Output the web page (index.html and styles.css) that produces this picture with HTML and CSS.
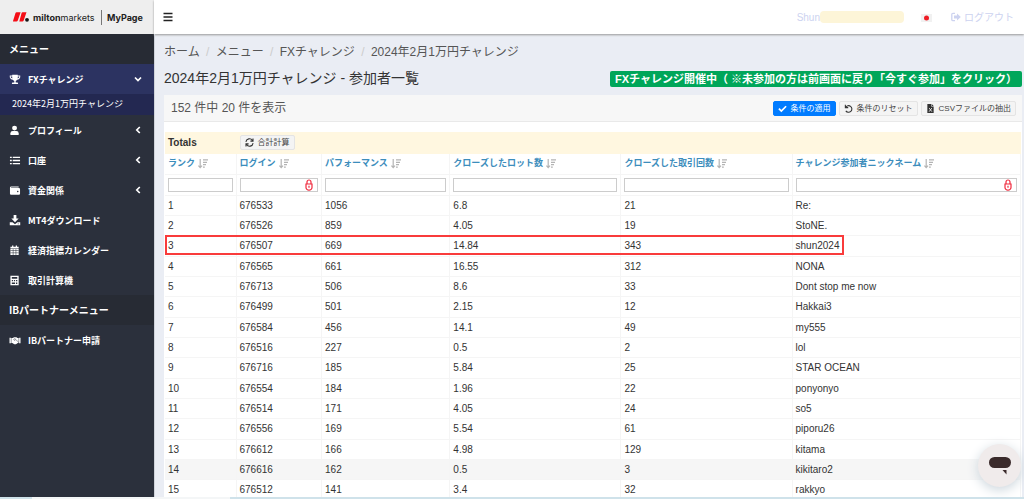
FILE: index.html
```html
<!DOCTYPE html>
<html lang="ja">
<head>
<meta charset="utf-8">
<title>MyPage</title>
<link rel="stylesheet" href="styles.css">
</head>
<body>
<svg class="defs" aria-hidden="true">
  <symbol id="sort" viewBox="0 0 10 10"><path d="M2.2 0v8M.4 6.6l1.8 2 1.8-2M5 .9h5M5 3.3h4M5 5.7h3M5 8.1h1.8" fill="none" stroke="#b4b4b4" stroke-width="1.2"/></symbol>
  <symbol id="left" viewBox="0 0 8 10"><path d="M5.8 2 2.8 5l3 3" fill="none" stroke="#fff" stroke-width="1.7"/></symbol>
  <symbol id="lock" viewBox="0 0 8 12"><path d="M2 5V3a2 2 0 0 1 4 0v2M1 5h6v3.500a3 2.600 0 0 1-6 0zM4 6.800v2" fill="none" stroke="#f0283c" stroke-width="1.2"/></symbol>
</svg>
<div class="app">
  <aside class="sidebar">
    <a class="brand" href="#">
      <svg class="logo" viewBox="0 0 17 12" aria-hidden="true"><path d="M3.600 1.200h4L4.800 9.500q-.4 1-1.400 1H.4q-.6 0-.3-.8L2.500 2q.3-.8 1.100-.8zM9.500 1.200h4l-2.800 8.300q-.4 1-1.400 1h-3L8.600 2q.2-.8.900-.8z" fill="#f40d16"/><circle cx="14" cy="8.800" r="1.900" fill="#151515"/></svg>
      <span class="name"><b>milton</b>markets</span><span class="product">MyPage</span>
    </a>
    <nav>
      <h2 class="section">メニュー</h2>
      <a class="item active" href="#"><svg viewBox="0 0 12 12"><path d="M3 .7h6v1h2.700v1.600C11.700 5 10.200 6 8.400 6.300 7.900 7 7.300 7.400 6.800 7.600v1.600h1.700c.6 0 .9.500.9 1.800H2.600c0-1.300.3-1.800.9-1.800h1.700V7.600C4.700 7.400 4.100 7 3.600 6.300 1.800 6 .3 5 .3 3.300V1.700H3zM1.300 2.800c0 1 .7 1.700 1.800 2.100L2.900 2.800zm9.400 0H9.100l-.2 2.100c1.100-.4 1.800-1.100 1.800-2.100z" fill="#fff" fill-rule="evenodd"/></svg><span>FXチャレンジ</span><svg class="caret" viewBox="0 0 8 10"><path d="M1 3.500 4 6.500l3-3" fill="none" stroke="#fff" stroke-width="1.700"/></svg></a>
      <a class="sub" href="#">2024年2月1万円チャレンジ</a>
      <a class="item" href="#"><svg viewBox="0 0 12 12"><circle cx="5.500" cy="3.400" r="2.700" fill="#fff"/><path d="M1 11V9q0-2.500 2.500-2.500h4Q10 6.500 10 9v2z" fill="#fff"/></svg><span>プロフィール</span><svg class="caret"><use href="#left"/></svg></a>
      <a class="item" href="#"><svg viewBox="0 0 12 12"><path d="M.5 2.500h2M.5 6h2M.5 9.500h2M3.500 2.500h8M3.500 6h8M3.500 9.500h8" stroke="#fff" stroke-width="1.400"/></svg><span>口座</span><svg class="caret"><use href="#left"/></svg></a>
      <a class="item" href="#"><svg viewBox="0 0 12 12"><path d="M2 1.500h8v1.200H1.700v.6h8.600q1.200 0 1.200 1.200v5q0 1.200-1.200 1.200H1.700Q.5 10.700.5 9.500V3q0-1.500 1.500-1.500zM9 6.200a.8.8 0 1 0 .01 0z" fill="#fff" fill-rule="evenodd"/></svg><span>資金関係</span><svg class="caret"><use href="#left"/></svg></a>
      <a class="item" href="#"><svg viewBox="0 0 12 12"><path d="M4.500 0h3v3.800H10L6 7.900 2 3.800h2.500zM.3 8h3L6 10l2.700-2h3v3.300H.3zM9 9.300v.8h1v-.8z" fill="#fff" fill-rule="evenodd"/></svg><span>MT4ダウンロード</span></a>
      <a class="item" href="#"><svg viewBox="0 0 12 12"><path d="M1 2h1.800V.5h1.400V2h2.600V.5h1.400V2H10v1.500H1zM1 4.200h9V11H1z" fill="#fff"/><path d="M1 6h9M1 8.500h9M4 4.500V11M7 4.500V11" stroke="#2c313d" stroke-width=".6"/></svg><span>経済指標カレンダー</span></a>
      <a class="item" href="#"><svg viewBox="0 0 12 12"><path d="M1 .7h9v10.500H1zM2.500 2.200v2h6v-2zM2.500 5.500v1.300h1.300V5.500zm2.300 0v1.300h1.300V5.500zm2.300 0v1.300h1.400V5.500zM2.500 8.200v1.500h3.600V8.200zm4.600 0v1.500h1.400V8.200z" fill="#fff" fill-rule="evenodd"/></svg><span>取引計算機</span></a>
      <h2 class="section">IBパートナーメニュー</h2>
      <a class="item" href="#"><svg viewBox="0 0 12 12"><path d="M0 3h1.500v6H0zM10.500 3H12v6h-1.500zM2 3.200h1.500L5 2.400h2.500l1.200.8H10v5l-1 .4-2 1.400H5.300L3 8.600H2z" fill="#fff"/><path d="M6.300 3.300 4.600 5.200l1 .6 1.300-.9 2.600 2.600" fill="none" stroke="#2c313d" stroke-width=".6"/></svg><span>IBパートナー申請</span></a>
    </nav>
  </aside>
  <div class="page">
    <header class="topbar">
      <button class="menu" aria-label="メニュー"><svg viewBox="0 0 10 10"><path d="M.5 1.500h9M.5 5h9M.5 8.500h9" stroke="#222" stroke-width="1.500"/></svg></button>
      <span class="user">Shun<span class="mask"></span></span>
      <svg class="flag" viewBox="0 0 11 8" role="img" aria-label="日本語"><path d="M0 0h11v8H0z" fill="#f1f1f1"/><circle cx="5.500" cy="4" r="2.500" fill="#ee1c25"/></svg>
      <a class="logout" href="#"><svg viewBox="0 0 10 10"><path d="M4 1.300H2q-1.200 0-1.200 1.200v5Q.8 8.700 2 8.700h2" fill="none" stroke="#cdd3f0" stroke-width="1.300"/><path d="M3 3.600h3V1.400L9.800 5 6 8.600V6.400H3z" fill="#cdd3f0"/></svg>ログアウト</a>
    </header>
    <main class="content">
      <nav class="crumbs"><a href="#">ホーム</a><i>/</i><a href="#">メニュー</a><i>/</i><a href="#">FXチャレンジ</a><i>/</i><a href="#">2024年2月1万円チャレンジ</a></nav>
      <div class="heading"><h1>2024年2月1万円チャレンジ - 参加者一覧</h1><strong class="notice">FXチャレンジ開催中（ ※未参加の方は前画面に戻り「今すぐ参加」をクリック）</strong></div>
      <section class="card">
        <div class="card-head">
          <span class="count">152 件中 20 件を表示</span>
          <button class="btn primary"><svg viewBox="0 0 10 10"><path d="m1 5.200 2.700 2.700L9 2.500" fill="none" stroke="#fff" stroke-width="1.900"/></svg>条件の適用</button>
          <button class="btn"><svg viewBox="0 0 10 10"><path d="M1.500.8V4h3.200M1.800 3.700A3.700 3.700 0 1 1 2 7.600" fill="none" stroke="#333" stroke-width="1.200"/></svg>条件のリセット</button>
          <button class="btn"><svg viewBox="0 0 10 10"><path d="M1.500 0h4.300v2.800h2.700V10h-7zM6.400 0l2.100 2.200H6.400z" fill="#333"/><path d="m3.500 4.500 3 4M6.500 4.500l-3 4" stroke="#fff" stroke-width=".9"/></svg>CSVファイルの抽出</button>
        </div>
        <div class="card-body">
        <table class="grid">
          <colgroup><col class="c1"><col class="c2"><col class="c3"><col class="c4"><col class="c4"><col></colgroup>
          <thead>
            <tr class="totals"><th>Totals</th><td colspan="5"><button class="btn calc"><svg viewBox="0 0 10 10"><path d="M1 4.300a4 4 0 0 1 7.300-1.600M9 5.700a4 4 0 0 1-7.300 1.600M8.900.5v3H6M1.100 9.500v-3H4" fill="none" stroke="#333" stroke-width="1.200"/></svg>合計計算</button></td></tr>
            <tr class="labels">
              <th><a href="#">ランク<svg><use href="#sort"/></svg></a></th><th><a href="#">ログイン<svg><use href="#sort"/></svg></a></th><th><a href="#">パフォーマンス<svg><use href="#sort"/></svg></a></th><th><a href="#">クローズしたロット数<svg><use href="#sort"/></svg></a></th><th><a href="#">クローズした取引回数<svg><use href="#sort"/></svg></a></th><th><a href="#">チャレンジ参加者ニックネーム<svg><use href="#sort"/></svg></a></th>
            </tr>
            <tr class="filters">
              <td><div class="field"><input aria-label="ランク"></div></td><td><div class="field"><input aria-label="ログイン"><svg><use href="#lock"/></svg></div></td><td><div class="field"><input aria-label="パフォーマンス"></div></td><td><div class="field"><input aria-label="クローズしたロット数"></div></td><td><div class="field"><input aria-label="クローズした取引回数"></div></td><td><div class="field"><input aria-label="チャレンジ参加者ニックネーム"><svg><use href="#lock"/></svg></div></td>
            </tr>
          </thead>
          <tbody>
            <tr><td>1</td><td>676533</td><td>1056</td><td>6.8</td><td>21</td><td>Re:</td></tr>
            <tr><td>2</td><td>676526</td><td>859</td><td>4.05</td><td>19</td><td>StoNE.</td></tr>
            <tr class="marked"><td>3<span class="frame"></span></td><td>676507</td><td>669</td><td>14.84</td><td>343</td><td>shun2024</td></tr>
            <tr><td>4</td><td>676565</td><td>661</td><td>16.55</td><td>312</td><td>NONA</td></tr>
            <tr><td>5</td><td>676713</td><td>506</td><td>8.6</td><td>33</td><td>Dont stop me now</td></tr>
            <tr><td>6</td><td>676499</td><td>501</td><td>2.15</td><td>12</td><td>Hakkai3</td></tr>
            <tr><td>7</td><td>676584</td><td>456</td><td>14.1</td><td>49</td><td>my555</td></tr>
            <tr><td>8</td><td>676516</td><td>227</td><td>0.5</td><td>2</td><td>lol</td></tr>
            <tr><td>9</td><td>676716</td><td>185</td><td>5.84</td><td>25</td><td>STAR OCEAN</td></tr>
            <tr><td>10</td><td>676554</td><td>184</td><td>1.96</td><td>22</td><td>ponyonyo</td></tr>
            <tr><td>11</td><td>676514</td><td>171</td><td>4.05</td><td>24</td><td>so5</td></tr>
            <tr><td>12</td><td>676556</td><td>169</td><td>5.54</td><td>61</td><td>piporu26</td></tr>
            <tr><td>13</td><td>676612</td><td>166</td><td>4.98</td><td>129</td><td>kitama</td></tr>
            <tr class="hover"><td>14</td><td>676616</td><td>162</td><td>0.5</td><td>3</td><td>kikitaro2</td></tr>
            <tr><td>15</td><td>676512</td><td>141</td><td>3.4</td><td>32</td><td>rakkyo</td></tr>
          </tbody>
        </table>
        </div>
      </section>
    </main>
  </div>
</div>
<div class="status"><span></span></div>
<button class="chat" aria-label="チャット"><svg viewBox="0 0 24 20"><rect x="1" y="1" width="22" height="11" rx="5.500" fill="#3a2a2b"/><path d="M14.500 14h4v4.500z" fill="#3a2a2b"/></svg></button>
</body>
</html>
```
FILE: styles.css
```css
* { box-sizing: border-box; }
body { margin: 0; height: 100vh; display: flex; flex-direction: column; overflow: hidden; font: 10px/15px "Liberation Sans", "Noto Sans CJK JP", sans-serif; color: #333; }
a { color: inherit; text-decoration: none; }
button, input { font: inherit; color: inherit; }
h1, h2 { margin: 0; }
.defs { position: absolute; width: 0; height: 0; }
.app { flex: 1; min-height: 0; display: flex; }

.sidebar { flex: 0 0 154px; background: #2b303c; color: #fff; font-family: "Noto Sans CJK JP", sans-serif; overflow: hidden; }
.brand { height: 34px; display: flex; align-items: center; padding-left: 13px; background: #eee; color: #222; font-family: Inter, sans-serif; font-size: 9px; }
.logo { width: 17px; height: 12px; margin-right: 3px; }
.name { width: 69px; border-right: 1px solid #777; }
.product { font-weight: 700; padding-left: 5px; }
.section { height: 30px; line-height: 30px; padding-left: 9px; font-size: 10px; background: #272b34; }
.item { height: 30px; display: flex; align-items: center; padding: 0 12px 0 9px; font-weight: 700; font-size: 9px; }
.item svg { width: 12px; height: 11px; margin-right: 7px; }
.item span { flex: 1; }
.item .caret { width: 8px; height: 10px; margin: 0; }
.active { background: #2c3361; }
.sub { display: block; height: 21px; line-height: 20px; padding-left: 12px; font-size: 9px; background: #232851; }

.page { flex: 1; min-width: 0; display: flex; flex-direction: column; background: #eaedf4; }
.topbar { flex: 0 0 34px; display: flex; align-items: center; padding: 0 10px 0 9px; background: #fff; box-shadow: 0 1px 2px #999; color: #cdd3f0; }
.menu { padding: 0; border: 0; background: none; width: 10px; height: 10px; margin-right: auto; }
.menu svg { display: block; }
.user { display: flex; align-items: center; }
.mask { width: 84px; height: 12px; border-radius: 4px; background: #fdf5d8; }
.flag { width: 11px; height: 8px; margin: 2px 19px 0 17px; }
.logout { display: flex; align-items: center; gap: 3px; }
.logout svg { width: 10px; height: 10px; }

.content { flex: 1; min-height: 0; overflow: hidden; padding: 8px 2px 0 9px; border-left: 1px solid #cfd3da; }
.crumbs { display: flex; height: 20px; line-height: 20px; font-size: 12px; color: #555; }
.crumbs i { width: 16px; text-align: center; font-style: normal; color: #ccc; }
.heading { display: flex; justify-content: space-between; align-items: center; height: 33px; }
h1 { font-size: 14px; font-weight: 400; }
.notice { height: 16px; line-height: 16px; padding: 0 5px; border-radius: 2px; background: #00a65a; color: #fff; font-size: 11px; white-space: nowrap; }
.card { background: #fff; }
.card-head { display: flex; align-items: center; gap: 3px; height: 27px; padding: 0 6px 0 7px; background: #f7f7f7; border-bottom: 1px solid #e9e9e9; }
.count { flex: 1; font-size: 12px; color: #555; }
.btn { display: flex; align-items: center; gap: 4px; height: 15px; padding: 0 4px; border: 1px solid #e4e4e4; border-radius: 2px; background: #f4f4f4; color: #444; font-size: 8px; line-height: 13px; white-space: nowrap; }
.btn svg { width: 9px; height: 9px; }
.primary { background: #007bff; border-color: #007bff; color: #fff; }

.card-body { padding: 10px 1px 0; }
.grid { width: 100%; table-layout: fixed; border-collapse: collapse; }
.c1 { width: 8.3%; }
.c2 { width: 10%; }
.c3 { width: 15%; }
.c4 { width: 20%; }
.grid th, .grid td { height: 20px; padding: 0 3px; text-align: left; white-space: nowrap; border: solid #f5f5f5; border-width: 0 1px 1px 0; }
.grid thead tr > *, .grid tbody tr:nth-child(3n) td { height: 21px; }
.grid .totals > * { background: #fff7e0; border-color: #fff7e0; }
.labels a { display: flex; align-items: center; gap: 3px; color: #3c8dbc; font-size: 9px; }
.labels svg { width: 10px; height: 10px; }
.filters .field { display: flex; position: relative; }
.filters input { width: 100%; height: 14px; padding: 0 2px; border: 1px solid #ccc; background: #fff; }
.filters svg { position: absolute; right: 5px; top: 1px; width: 8px; height: 12px; }
.marked { position: relative; }
.frame { position: absolute; left: 0; top: 0; width: 79.4%; height: 20px; border: 2px solid #f93b3b; }
.hover { background: #f6f6f6; }

.status { flex: 0 0 2px; background: #cfe2ea; padding-left: 32px; }
.status span { display: block; width: 20%; height: 2px; background: #f4f6f7; }
.chat { position: fixed; right: 3px; bottom: 12px; width: 43px; height: 43px; display: flex; align-items: center; justify-content: center; padding: 0; border: 0; border-radius: 50%; background: #f0ebeb; box-shadow: 0 3px 12px #cbd5dc; }
.chat svg { width: 24px; height: 20px; }
```
